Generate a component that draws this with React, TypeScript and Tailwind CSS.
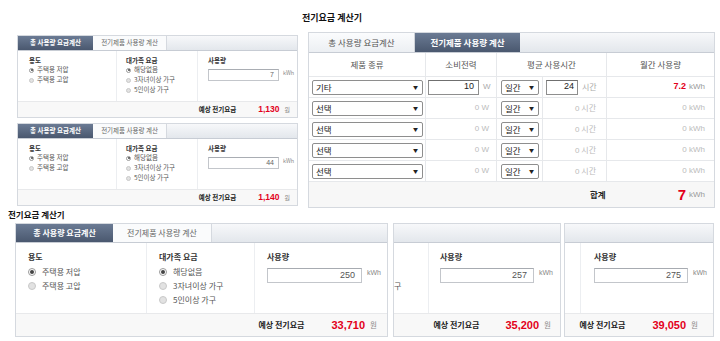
import React from 'react';

const KR = "font-['Noto_Sans_CJK_KR','Noto_Sans',sans-serif]";
const NUM = "font-['Liberation_Sans',Arial,sans-serif]";

function Radio({ on, big }: { on?: boolean; big?: boolean }) {
  const size = big ? 'w-[8px] h-[8px]' : 'w-[5px] h-[5px]';
  const dot = big ? 'w-[4px] h-[4px]' : 'w-[2px] h-[2px]';
  return (
    <span
      className={`${size} shrink-0 rounded-full border flex items-center justify-center ${
        on ? 'border-[#9a9a9a] bg-white' : 'border-[#c9c9c9] bg-[#e2e2e2]'
      }`}
    >
      {on && <span className={`${dot} rounded-full bg-[#444]`} />}
    </span>
  );
}

function RadioRow({ label, on, big }: { label: string; on?: boolean; big?: boolean }) {
  return big ? (
    <div className="h-[14px] flex items-center gap-[6px] text-[8px] text-[#555]">
      <Radio on={on} big />
      <span>{label}</span>
    </div>
  ) : (
    <div className="h-[10px] flex items-center gap-[3px] text-[6.5px] text-[#555]">
      <Radio on={on} />
      <span>{label}</span>
    </div>
  );
}

/* ---------- small calculators (top left) ---------- */

function SmallCalc({ usage, fee }: { usage: string; fee: string }) {
  return (
    <div className="w-[281px] h-[83px] border border-[#d5d9df] flex flex-col bg-white">
      <div className="h-[15px] shrink-0 flex border-b border-[#c7ccd4] bg-gradient-to-b from-[#f7f8fa] to-[#e3e7ec]">
        <div className="w-[75px] flex items-center justify-center bg-gradient-to-b from-[#6b7b94] to-[#4a586f] text-white font-bold text-[6.5px]">
          총 사용량 요금계산
        </div>
        <div className="w-[74px] flex items-center justify-center bg-[#fafbfc] border-r border-[#d5d9df] text-[#666] text-[6.5px]">
          전기제품 사용량 계산
        </div>
      </div>
      <div className="h-[50px] shrink-0 flex">
        <div className="w-[99px] border-r border-[#eceef1] pl-[11px] pt-[5px]">
          <div className="text-[6.5px] leading-[9px] font-bold text-[#333]">용도</div>
          <RadioRow on label="주택용 저압" />
          <RadioRow label="주택용 고압" />
        </div>
        <div className="w-[81px] border-r border-[#eceef1] pl-[9px] pt-[5px]">
          <div className="text-[6.5px] leading-[9px] font-bold text-[#333]">대가족 요금</div>
          <RadioRow on label="해당없음" />
          <RadioRow label="3자녀이상 가구" />
          <RadioRow label="5인이상 가구" />
        </div>
        <div className="flex-1 pl-[10px] pt-[5px]">
          <div className="text-[6.5px] leading-[9px] font-bold text-[#333]">사용량</div>
          <div className="flex mt-[4px]">
            <div className={`w-[71px] h-[12px] border border-[#c3c6cb] border-t-[#a9adb3] bg-white flex items-center justify-end pr-[4px] text-[7px] text-[#666] ${NUM}`}>
              {usage}
            </div>
            <span className="ml-[4px] text-[5.5px] text-[#888] leading-[8px]">kWh</span>
          </div>
        </div>
      </div>
      <div className="flex-1 flex items-center justify-end pr-[7px] bg-[#f8f8f8] border-t border-[#e8e9eb]">
        <span className="text-[6.5px] font-bold text-[#222]">예상 전기요금</span>
        <span className={`ml-[22px] text-[8.5px] font-bold text-[#e3001b] ${NUM}`}>{fee}</span>
        <span className="ml-[5px] text-[6px] text-[#888]">원</span>
      </div>
    </div>
  );
}

/* ---------- appliance calculator (top right) ---------- */

function Select({ text, w }: { text: string; w: string }) {
  return (
    <div className={`${w} h-[15px] border border-[#8e8e8e] rounded-[2px] bg-white flex items-center justify-between pl-[3px] pr-[4px] text-[8.5px] text-[#222]`}>
      <span>{text}</span>
      <span className="text-[5px] text-[#222]">▼</span>
    </div>
  );
}

const products = [
  { name: '기타', watt: '10', hours: '24', kwh: '7.2', active: true },
  { name: '선택' },
  { name: '선택' },
  { name: '선택' },
  { name: '선택' },
];

function ApplianceCalc() {
  return (
    <div className="w-[407px] h-[176px] border border-[#d5d9df] flex flex-col bg-white">
      <div className="h-[20px] shrink-0 flex border-b border-[#c7ccd4] bg-gradient-to-b from-[#f7f8fa] to-[#e3e7ec]">
        <div className="w-[106px] flex items-center justify-center bg-gradient-to-b from-[#fbfcfd] to-[#eceff3] border-r border-[#d0d4da] text-[8.5px] text-[#555]">
          총 사용량 요금계산
        </div>
        <div className="w-[105px] flex items-center justify-center bg-gradient-to-b from-[#6b7b94] to-[#4a586f] text-white font-bold text-[8.5px]">
          전기제품 사용량 계산
        </div>
      </div>
      <div className="h-[24px] shrink-0 flex border-b border-[#e6e8eb] text-[8.5px] text-[#555]">
        <div className="w-[117px] border-r border-[#e6e8eb] flex items-center justify-center">제품 종류</div>
        <div className="w-[71px] border-r border-[#e6e8eb] flex items-center justify-center">소비전력</div>
        <div className="w-[110px] border-r border-[#e6e8eb] flex items-center justify-center">평균 사용시간</div>
        <div className="flex-1 flex items-center justify-center">월간 사용량</div>
      </div>
      {products.map((p, i) => (
        <div key={i} className="h-[21px] shrink-0 flex border-b border-[#e6e8eb] text-[8px]">
          <div className="w-[117px] border-r border-[#e6e8eb] flex items-center pl-[3px]">
            <Select text={p.name} w="w-[111px]" />
          </div>
          <div className="w-[71px] border-r border-[#e6e8eb] flex items-center">
            {p.active ? (
              <>
                <div className={`ml-[2px] w-[51px] h-[15px] border border-[#8e8e8e] border-t-[#6f6f6f] bg-white flex items-center justify-end pr-[4px] text-[9px] text-[#222] ${NUM}`}>
                  {p.watt}
                </div>
                <span className={`ml-[4px] text-[#aaa] ${NUM}`}>W</span>
              </>
            ) : (
              <span className={`ml-auto mr-[7px] text-[#bbb] ${NUM}`}>0 W</span>
            )}
          </div>
          <div className="w-[46px] border-r border-[#e6e8eb] flex items-center pl-[4px]">
            <Select text="일간" w="w-[38px]" />
          </div>
          <div className="w-[64px] border-r border-[#e6e8eb] flex items-center">
            {p.active ? (
              <>
                <div className={`ml-[3px] w-[32px] h-[15px] border border-[#8e8e8e] border-t-[#6f6f6f] bg-white flex items-center justify-end pr-[3px] text-[9px] text-[#222] ${NUM}`}>
                  {p.hours}
                </div>
                <span className="ml-[4px] text-[#aaa]">시간</span>
              </>
            ) : (
              <span className="ml-auto mr-[10px] text-[#bbb]">
                <span className={NUM}>0</span> 시간
              </span>
            )}
          </div>
          <div className="flex-1 flex items-center justify-end pr-[9px]">
            {p.active ? (
              <>
                <span className={`font-bold text-[9px] text-[#e3001b] ${NUM}`}>{p.kwh}</span>
                <span className={`ml-[3px] text-[#999] ${NUM}`}>kWh</span>
              </>
            ) : (
              <span className={`text-[#bbb] ${NUM}`}>0 kWh</span>
            )}
          </div>
        </div>
      ))}
      <div className="flex-1 flex items-center justify-end pr-[9px] bg-[#f7f7f7]">
        <span className="text-[8.5px] font-bold text-[#222]">합계</span>
        <span className={`ml-[72px] text-[15px] leading-[15px] font-bold text-[#e3001b] ${NUM}`}>7</span>
        <span className={`ml-[3px] text-[8px] text-[#999] ${NUM}`}>kWh</span>
      </div>
    </div>
  );
}

/* ---------- large calculators (bottom) ---------- */

function UsageCol({ value, pl, inputW }: { value: string; pl: string; inputW: string }) {
  return (
    <div className={`flex-1 ${pl} pt-[8px]`}>
      <div className="text-[8px] leading-[12px] font-bold text-[#333]">사용량</div>
      <div className="flex mt-[5px]">
        <div className={`${inputW} h-[15px] border border-[#c3c6cb] border-t-[#a7abb1] bg-white flex items-center justify-end pr-[6px] text-[9px] text-[#555] ${NUM}`}>
          {value}
        </div>
        <span className={`ml-[5px] text-[7px] leading-[10px] text-[#888] ${NUM}`}>kWh</span>
      </div>
    </div>
  );
}

function FeeFooter({ fee, pr, gap }: { fee: string; pr: string; gap: string }) {
  return (
    <div className={`flex-1 flex items-center justify-end ${pr} bg-[#f8f8f8] border-t border-[#e8e9eb]`}>
      <span className="text-[8px] font-bold text-[#222]">예상 전기요금</span>
      <span className={`${gap} text-[11px] font-bold text-[#e3001b] ${NUM}`}>{fee}</span>
      <span className="ml-[5px] text-[7.5px] text-[#888]">원</span>
    </div>
  );
}

function PlainTabBar() {
  return <div className="h-[19px] shrink-0 border-b border-[#c7ccd4] bg-gradient-to-b from-[#f7f8fa] to-[#e3e7ec]" />;
}

function BigCalc() {
  return (
    <div className="w-[373px] h-[114px] border border-[#d5d9df] flex flex-col bg-white">
      <div className="h-[19px] shrink-0 flex border-b border-[#c7ccd4] bg-gradient-to-b from-[#f7f8fa] to-[#e3e7ec]">
        <div className="w-[97px] flex items-center justify-center gap-[3px] bg-gradient-to-b from-[#6b7b94] to-[#4a586f] text-white font-bold text-[8px]">
          총 사용량 요금계산
        </div>
        <div className="w-[99px] flex items-center justify-center bg-[#fafbfc] border-r border-[#d5d9df] text-[#666] text-[8px]">
          전기제품 사용량 계산
        </div>
      </div>
      <div className="h-[70px] shrink-0 flex">
        <div className="w-[131px] border-r border-[#eceef1] pl-[12px] pt-[8px]">
          <div className="text-[8px] leading-[12px] font-bold text-[#333] mb-[2px]">용도</div>
          <RadioRow big on label="주택용 저압" />
          <RadioRow big label="주택용 고압" />
        </div>
        <div className="w-[108px] border-r border-[#eceef1] pl-[12px] pt-[8px]">
          <div className="text-[8px] leading-[12px] font-bold text-[#333] mb-[2px]">대가족 요금</div>
          <RadioRow big on label="해당없음" />
          <RadioRow big label="3자녀이상 가구" />
          <RadioRow big label="5인이상 가구" />
        </div>
        <UsageCol value="250" pl="pl-[12px]" inputW="w-[95px]" />
      </div>
      <FeeFooter fee="33,710" pr="pr-[10px]" gap="ml-[27px]" />
    </div>
  );
}

function CropCalc({
  w,
  leftW,
  tail,
  value,
  fee,
  pl,
  pr,
  gap,
}: {
  w: string;
  leftW: string;
  tail?: string;
  value: string;
  fee: string;
  pl: string;
  pr: string;
  gap: string;
}) {
  return (
    <div className={`${w} h-[114px] border border-[#d5d9df] flex flex-col bg-white`}>
      <PlainTabBar />
      <div className="h-[70px] shrink-0 flex">
        <div className={`${leftW} border-r border-[#eceef1] pt-[36px]`}>
          {tail && <div className="h-[14px] flex items-center text-[8px] text-[#555]">{tail}</div>}
        </div>
        <UsageCol value={value} pl={pl} inputW="w-[94px]" />
      </div>
      <FeeFooter fee={fee} pr={pr} gap={gap} />
    </div>
  );
}

export default function App() {
  return (
    <div className={`w-[720px] h-[341px] bg-white overflow-hidden ${KR}`}>
      <div className="h-[32px] pl-[302px] pt-[12px] text-[9px] leading-[12px] font-bold text-[#111]">
        전기요금 계산기
      </div>
      <div className="h-[176px] flex">
        <div className="ml-[17px] mt-[3px] flex flex-col gap-[5px]">
          <SmallCalc usage="7" fee="1,130" />
          <SmallCalc usage="44" fee="1,140" />
        </div>
        <div className="ml-[10px]">
          <ApplianceCalc />
        </div>
      </div>
      <div className="h-[15px] pl-[8px] text-[8.5px] leading-[12px] font-bold text-[#111]">전기요금 계산기</div>
      <div className="flex">
        <div className="ml-[15px]">
          <BigCalc />
        </div>
        <div className="ml-[5px]">
          <CropCalc w="w-[168px]" leftW="w-[35px]" tail="구" value="257" fee="35,200" pl="pl-[11px]" pr="pr-[9px]" gap="ml-[26px]" />
        </div>
        <div className="ml-[3px]">
          <CropCalc w="w-[150px]" leftW="w-[16px]" value="275" fee="39,050" pl="pl-[13px]" pr="pr-[15px]" gap="ml-[27px]" />
        </div>
      </div>
    </div>
  );
}
